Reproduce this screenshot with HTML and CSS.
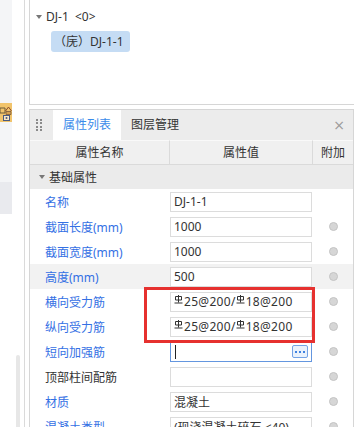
FILE: index.html
```html
<!DOCTYPE html>
<html lang="zh-CN">
<head>
    <meta charset="UTF-8">
    <meta name="viewport" content="width=device-width, initial-scale=1.0">
    <title>属性列表</title>
    <link rel="stylesheet" href="styles.css">
</head>
<body>
    <div class="app">
        <div class="side">
            <div class="side-top">
                <div class="side-icon">
                    <svg width="12" height="19" viewBox="0 0 12 19">
                        <path d="M0 5h5v5H0z" fill="none" stroke="#6b5a3a" stroke-width="1"/>
                        <path d="M5.5 8l3-4 3 4" fill="none" stroke="#8a4b2a" stroke-width="1"/>
                        <path d="M6 8.5h5v3H6z" fill="#d8a050" stroke="#7a5a38" stroke-width="0.8"/>
                        <rect x="3.5" y="12.5" width="6" height="5" fill="#f7e7c6" stroke="#4a5a80" stroke-width="1"/>
                        <circle cx="6.5" cy="15" r="1" fill="#4a5a80"/>
                    </svg>
                </div>
            </div>
            <div class="side-sel"></div>
        </div>
        <div class="gutter"><div class="scroll"></div></div>
        <div class="rule"></div>

        <div class="main">
            <div class="tree">
                <div class="node"><span class="caret"></span>DJ-1&nbsp; &lt;0&gt;</div>
                <div class="node child"><span class="sel">（庑）DJ-1-1</span></div>
            </div>

            <div class="props">
                <div class="tabs">
                    <div class="grip">
                        <i></i><i></i><i></i><i></i><i></i><i></i><i></i><i></i>
                    </div>
                    <div class="tab active">属性列表</div>
                    <div class="tab">图层管理</div>
                    <div class="close">×</div>
                </div>

                <div class="grid">
                    <div class="head">属性名称</div>
                    <div class="head">属性值</div>
                    <div class="head last">附加</div>

                    <div class="group"><span class="caret"></span>基础属性</div>

                    <div class="row">
                        <div class="name">名称</div>
                        <div class="cell"><div class="box">DJ-1-1</div></div>
                        <div class="extra"></div>
                    </div>
                    <div class="row">
                        <div class="name">截面长度(mm)</div>
                        <div class="cell"><div class="box">1000</div></div>
                        <div class="extra"><span class="dot"></span></div>
                    </div>
                    <div class="row">
                        <div class="name">截面宽度(mm)</div>
                        <div class="cell"><div class="box">1000</div></div>
                        <div class="extra"><span class="dot"></span></div>
                    </div>
                    <div class="row shaded">
                        <div class="name">高度(mm)</div>
                        <div class="cell"><div class="box">500</div></div>
                        <div class="extra"><span class="dot"></span></div>
                    </div>
                    <div class="row">
                        <div class="name">横向受力筋</div>
                        <div class="cell"><div class="box rebar"><svg class="bar" width="9" height="9" viewBox="0 0 9 9"><path d="M1.5 1.5h6v3.5h-6z M4.5 0v7.5 M0.5 8h8" fill="none" stroke="#333" stroke-width="1"/></svg>25@200/<svg class="bar" width="9" height="9" viewBox="0 0 9 9"><path d="M1.5 1.5h6v3.5h-6z M4.5 0v7.5 M0.5 8h8" fill="none" stroke="#333" stroke-width="1"/></svg>18@200</div></div>
                        <div class="extra"><span class="dot"></span></div>
                    </div>
                    <div class="row">
                        <div class="name">纵向受力筋</div>
                        <div class="cell"><div class="box rebar"><svg class="bar" width="9" height="9" viewBox="0 0 9 9"><path d="M1.5 1.5h6v3.5h-6z M4.5 0v7.5 M0.5 8h8" fill="none" stroke="#333" stroke-width="1"/></svg>25@200/<svg class="bar" width="9" height="9" viewBox="0 0 9 9"><path d="M1.5 1.5h6v3.5h-6z M4.5 0v7.5 M0.5 8h8" fill="none" stroke="#333" stroke-width="1"/></svg>18@200</div></div>
                        <div class="extra"><span class="dot"></span></div>
                    </div>
                    <div class="row">
                        <div class="name">短向加强筋</div>
                        <div class="cell"><div class="box focus"><span class="cursor"></span><span class="more"><i></i><i></i><i></i></span></div></div>
                        <div class="extra"><span class="dot"></span></div>
                    </div>
                    <div class="row">
                        <div class="name plain">顶部柱间配筋</div>
                        <div class="cell"><div class="box"></div></div>
                        <div class="extra"><span class="dot"></span></div>
                    </div>
                    <div class="row">
                        <div class="name">材质</div>
                        <div class="cell"><div class="box">混凝土</div></div>
                        <div class="extra"><span class="dot"></span></div>
                    </div>
                    <div class="row">
                        <div class="name">混凝土类型</div>
                        <div class="cell"><div class="box">(现浇混凝土碎石 &lt;40)</div></div>
                        <div class="extra"><span class="dot"></span></div>
                    </div>
                </div>
            </div>
        </div>

        <div class="mark"></div>
    </div>
</body>
</html>
```

FILE: styles.css
```css
body {
    margin: 0;
    font-family: "Noto Sans", "Noto Sans CJK SC", sans-serif;
    font-size: 12px;
    color: #333;
    background-color: #fff;
}
.app {
    position: relative;
    display: flex;
    height: 427px;
    overflow: hidden;
}
.side {
    width: 12px;
    flex-shrink: 0;
    display: flex;
    flex-direction: column;
}
.side-top {
    height: 182px;
    padding-top: 103px;
    box-sizing: border-box;
    background-color: #f4f5f7;
}
.side-icon {
    width: 12px;
    height: 19px;
    background-color: #f1c46c;
}
.side-icon svg {
    display: block;
}
.side-sel {
    height: 32px;
    background-color: #e9eaee;
}
.gutter {
    width: 12px;
    flex-shrink: 0;
    padding-top: 355px;
}
.scroll {
    width: 4px;
    height: 72px;
    margin-left: 4px;
    background-color: #e7e7e7;
    border-radius: 2px 2px 0 0;
}
.rule {
    width: 1px;
    flex-shrink: 0;
    margin-right: 4px;
    background-color: #dadada;
}
.main {
    flex: 1;
    min-width: 0;
    display: flex;
    flex-direction: column;
}
.tree {
    height: 105px;
    flex-shrink: 0;
    box-sizing: border-box;
    padding: 8px 0 0 6px;
    border-left: 1px solid #d6d6d6;
    border-bottom: 1px solid #d6d6d6;
}
.node {
    display: flex;
    align-items: center;
    height: 18px;
    line-height: 18px;
}
.caret {
    width: 0;
    height: 0;
    margin-right: 4px;
    border-left: 3px solid transparent;
    border-right: 3px solid transparent;
    border-top: 4px solid #777;
}
.child {
    height: 21px;
    margin-top: 5px;
    padding-left: 15px;
}
.sel {
    display: block;
    height: 21px;
    line-height: 21px;
    padding: 0 6px 0 3px;
    background-color: #c5dcf4;
    border-radius: 3px;
}
.props {
    flex-shrink: 0;
    margin-top: 4px;
    border-top: 1px solid #d6d6d6;
    border-left: 1px solid #d6d6d6;
    border-right: 1px solid #d6d6d6;
}
.tabs {
    display: flex;
    align-items: center;
    height: 30px;
    background-color: #ececec;
}
.grip {
    width: 23px;
    height: 30px;
    display: grid;
    grid-template-columns: 2px 2px;
    grid-auto-rows: 2px;
    column-gap: 2px;
    row-gap: 1.5px;
    align-content: center;
    padding-left: 6px;
    box-sizing: border-box;
}
.grip i {
    background-color: #8a8a8a;
}
.tab {
    height: 30px;
    line-height: 30px;
    padding: 0 10px;
}
.tab.active {
    width: 68px;
    padding: 0;
    text-align: center;
    color: #3a8bea;
    background-color: #fff;
}
.close {
    margin-left: auto;
    margin-right: 8px;
    color: #9a9a9a;
    font-size: 14px;
    font-family: "DejaVu Sans", sans-serif;
}
.grid {
    display: grid;
    grid-template-columns: 140px 143px 1fr;
    grid-template-rows: 25px 24px;
    grid-auto-rows: 25px;
}
.head {
    line-height: 23px;
    text-align: center;
    background-color: #f0f0f0;
    border-top: 1px solid #f9f9f9;
    border-bottom: 1px solid #dadada;
    border-right: 1px solid #dadada;
}
.head.last {
    border-right: none;
}
.group {
    grid-column: 1 / -1;
    display: flex;
    align-items: center;
    padding-left: 9px;
    background-color: #ebebeb;
}
.row {
    display: contents;
}
.name, .cell, .extra {
    display: flex;
    align-items: center;
}
.name {
    padding-left: 15px;
    color: #3470e4;
}
.name.plain {
    color: #333;
}
.row.shaded .name,
.row.shaded .cell,
.row.shaded .extra {
    background-color: #f2f2f2;
}
.box {
    width: 142px;
    height: 20px;
    box-sizing: border-box;
    display: flex;
    align-items: center;
    padding: 0 3px;
    border: 1px solid #dcdcdc;
    background-color: #fff;
    white-space: nowrap;
    overflow: hidden;
}
.box.rebar {
    letter-spacing: 0.3px;
}
.bar {
    margin-top: -4px;
    margin-right: 1px;
}
.box.focus {
    justify-content: space-between;
    border-color: #6496df;
}
.cursor {
    width: 1px;
    height: 14px;
    margin-left: 1px;
    background-color: #222;
}
.more {
    width: 16px;
    height: 13px;
    box-sizing: border-box;
    display: flex;
    justify-content: center;
    align-items: center;
    gap: 2px;
    border: 1px solid #74a3e6;
    border-radius: 2px;
    background-color: #eaf2fc;
}
.more i {
    width: 2px;
    height: 2px;
    background-color: #3f82e0;
}
.extra {
    justify-content: center;
}
.dot {
    width: 9px;
    height: 9px;
    box-sizing: border-box;
    border-radius: 50%;
    border: 1px solid #c4c4c4;
    background-color: #d6d6d6;
}
.mark {
    position: absolute;
    left: 144px;
    top: 287px;
    width: 171px;
    height: 56px;
    box-sizing: border-box;
    border: 3px solid #e6312f;
}
```
